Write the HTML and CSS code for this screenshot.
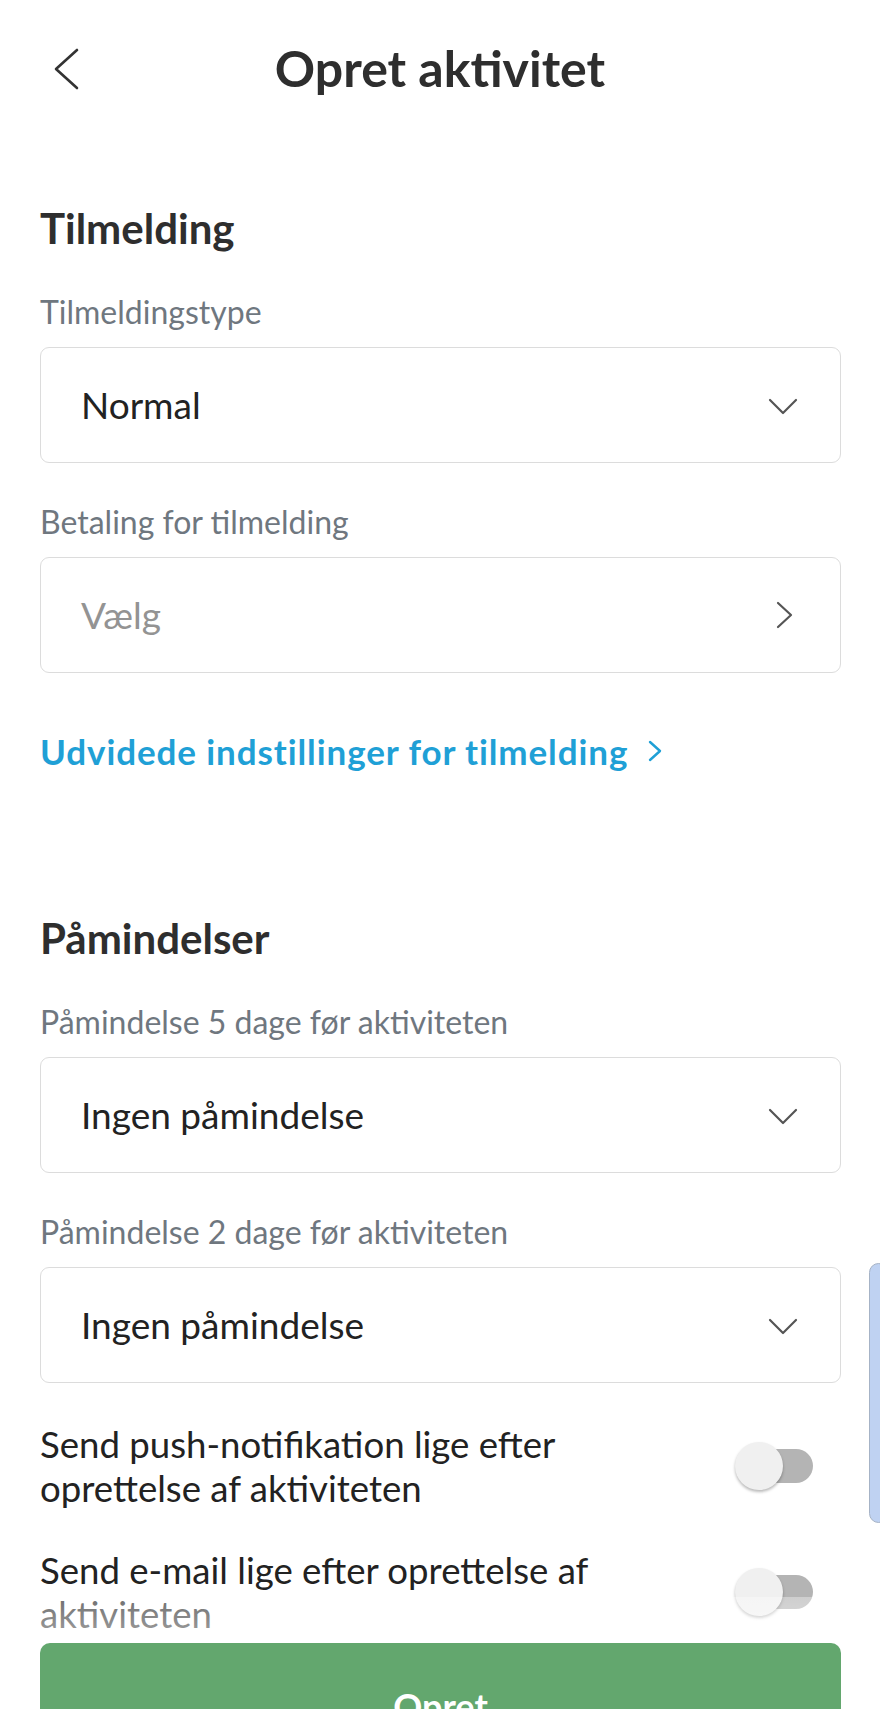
FILE: index.html
```html
<!DOCTYPE html>
<html lang="da">
<head>
<meta charset="utf-8">
<title>Opret aktivitet</title>
<link rel="stylesheet" href="styles.css">
</head>
<body>
<div class="screen">
  <header class="topbar">
    <div class="back">
      <svg width="30" height="44" viewBox="0 0 30 44" aria-hidden="true"><polyline points="23,3 2,22 23,41" fill="none" stroke="#333" stroke-width="2.6" stroke-linecap="round" stroke-linejoin="round"/></svg>
    </div>
    <h1 class="title">Opret aktivitet</h1>
    <div></div>
  </header>

  <main class="content">
    <h2 class="section-title first">Tilmelding</h2>

    <div class="field">
      <div class="label">Tilmeldingstype</div>
      <div class="box">
        <span class="value">Normal</span>
        <svg class="icon" width="30" height="30" viewBox="0 0 30 30" aria-hidden="true"><polyline points="2,10 15,23 28,10" fill="none" stroke="#555" stroke-width="2.2" stroke-linecap="round" stroke-linejoin="round"/></svg>
      </div>
    </div>

    <div class="field">
      <div class="label">Betaling for tilmelding</div>
      <div class="box">
        <span class="value placeholder">Vælg</span>
        <svg class="icon" width="30" height="30" viewBox="0 0 30 30" aria-hidden="true"><polyline points="10,3 23,15 10,27" fill="none" stroke="#555" stroke-width="2.2" stroke-linecap="round" stroke-linejoin="round"/></svg>
      </div>
    </div>

    <a class="link" href="#">Udvidede indstillinger for tilmelding
      <svg width="18" height="24" viewBox="0 0 18 24" aria-hidden="true"><polyline points="4,3 14,12 4,21" fill="none" stroke="#1fa0d6" stroke-width="2.4" stroke-linecap="round" stroke-linejoin="round"/></svg>
    </a>

    <h2 class="section-title second">Påmindelser</h2>

    <div class="field">
      <div class="label">Påmindelse 5 dage før aktiviteten</div>
      <div class="box">
        <span class="value">Ingen påmindelse</span>
        <svg class="icon" width="30" height="30" viewBox="0 0 30 30" aria-hidden="true"><polyline points="2,10 15,23 28,10" fill="none" stroke="#555" stroke-width="2.2" stroke-linecap="round" stroke-linejoin="round"/></svg>
      </div>
    </div>

    <div class="field">
      <div class="label">Påmindelse 2 dage før aktiviteten</div>
      <div class="box">
        <span class="value">Ingen påmindelse</span>
        <svg class="icon" width="30" height="30" viewBox="0 0 30 30" aria-hidden="true"><polyline points="2,10 15,23 28,10" fill="none" stroke="#555" stroke-width="2.2" stroke-linecap="round" stroke-linejoin="round"/></svg>
      </div>
    </div>

    <div class="toggle-row row-push">
      <div class="toggle-text">Send push-notifikation lige efter<br>oprettelse af aktiviteten</div>
      <span class="switch"><span class="track"></span><span class="knob"></span></span>
    </div>

    <div class="toggle-row row-mail">
      <div class="toggle-text">Send e-mail lige efter oprettelse af<br>aktiviteten</div>
      <span class="switch"><span class="track"></span><span class="knob"></span></span>
    </div>
  </main>

  <footer class="footer">
    <button class="primary">Opret</button>
  </footer>

  <div class="scroll-thumb"></div>
</div>
</body>
</html>
```

FILE: styles.css
```css
* { box-sizing: border-box; }

html, body {
  margin: 0;
  padding: 0;
  height: 1709px;
  overflow: hidden;
  background: #ffffff;
}

body {
  font-family: "Lato", "Noto Sans", sans-serif;
  color: #222222;
}

.screen {
  position: relative;
  width: 880px;
  height: 1709px;
  overflow: hidden;
}

.topbar {
  display: grid;
  grid-template-columns: 1fr auto 1fr;
  align-items: center;
  height: 137px;
}

.back {
  padding-left: 54px;
  display: flex;
  align-items: center;
  height: 44px;
}

.title {
  margin: 0;
  font-size: 50px;
  line-height: 137px;
  font-weight: 700;
  color: #2e2e2e;
}

.content {
  padding: 0 39px 0 40px;
}

.section-title {
  margin: 0;
  font-size: 42px;
  line-height: 50px;
  font-weight: 700;
  color: #2e2e2e;
}

.section-title.first { margin-top: 66px; }
.section-title.second { margin-top: 140px; }

.field { margin-top: 40px; }

.label {
  font-size: 32px;
  line-height: 38px;
  color: #6f777f;
  margin-bottom: 16px;
}

.box {
  height: 116px;
  border: 1.5px solid #dcdcdc;
  border-radius: 9px;
  display: flex;
  align-items: center;
  justify-content: space-between;
  padding: 0 42px 0 40px;
  background: #fff;
}

.value {
  font-size: 37px;
  line-height: 44px;
  color: #222;
}

.value.placeholder { color: #939393; }

.icon { display: block; }

.link {
  display: flex;
  align-items: center;
  gap: 18px;
  margin-top: 56px;
  font-size: 35px;
  line-height: 44px;
  letter-spacing: 0.9px;
  font-weight: 700;
  color: #1fa0d6;
  text-decoration: none;
}

.toggle-row {
  display: flex;
  align-items: center;
  justify-content: space-between;
  padding-right: 28px;
}

.row-push { margin-top: 39px; }
.row-mail { margin-top: 38px; }

.toggle-text {
  font-size: 36.6px;
  line-height: 44px;
  color: #222;
}

.switch {
  position: relative;
  display: block;
  width: 78px;
  height: 48px;
  flex: none;
}

.track {
  position: absolute;
  left: 14px;
  right: 0;
  top: 7px;
  height: 34px;
  border-radius: 17px;
  background: #b4b4b4;
}

.knob {
  position: absolute;
  left: 0;
  top: 0;
  width: 48px;
  height: 48px;
  border-radius: 50%;
  background: #f0f0f0;
  box-shadow: 0 2px 3px rgba(0, 0, 0, 0.28);
}

.footer {
  position: relative;
  margin-top: 7px;
  padding: 0 39px 0 40px;
}

.footer::before {
  content: "";
  position: absolute;
  left: 0;
  right: 0;
  top: -46px;
  height: 46px;
  background: linear-gradient(rgba(255,255,255,0.35), rgba(255,255,255,0.6));
}

.primary {
  display: block;
  width: 100%;
  height: 126px;
  border: none;
  border-radius: 10px;
  background: #63a76e;
  color: #ffffff;
  font-family: "Lato", "Noto Sans", sans-serif;
  font-size: 36px;
  font-weight: 700;
}

.scroll-thumb {
  position: absolute;
  right: -8px;
  top: 1263px;
  width: 19px;
  height: 260px;
  border-radius: 10px;
  background: #bfd2f2;
  border: 1.5px solid #a6b3c6;
}
```
